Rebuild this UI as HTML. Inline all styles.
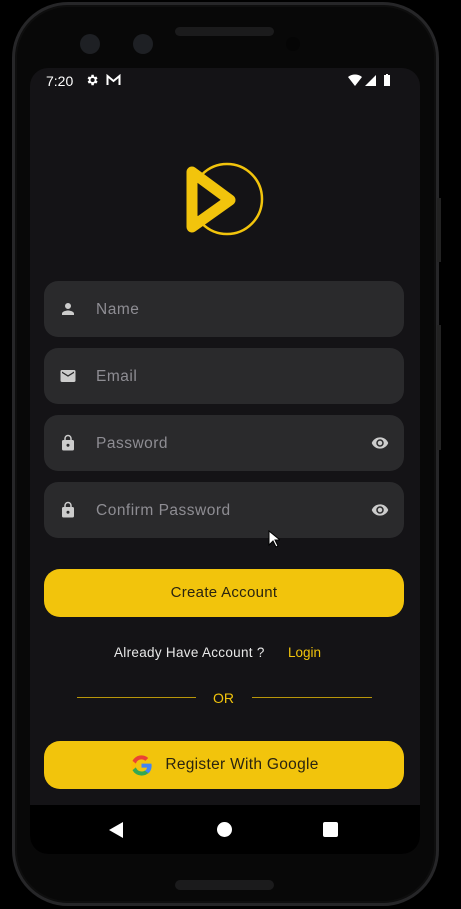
<!DOCTYPE html>
<html><head><style>
*{margin:0;padding:0;box-sizing:border-box}
body{width:461px;height:909px;background:#000;position:relative;overflow:hidden;font-family:"Liberation Sans",sans-serif}
.phone{position:absolute;left:12px;top:2px;width:427px;height:904px;border-radius:56px;background:#080808;border:3px solid #262628;box-shadow:inset 0 0 0 2px #0e0e0e}
.screen{position:absolute;left:30px;top:68px;width:390px;height:786px;background:#141316;border-radius:18px;overflow:hidden}
.t{position:absolute;color:#fff}
.field{position:absolute;left:14px;width:360px;height:56px;background:#2a2a2c;border-radius:14px}
.field span{position:absolute;left:52px;top:20px;color:#8e8d93;font-size:15.5px;letter-spacing:.5px}
.field svg{position:absolute;left:15px;top:19px}
.eye{left:auto!important;right:14px}
.btn{position:absolute;left:14px;width:360px;height:48px;background:#f2c40c;border-radius:16px;color:#2a2410;font-size:15px;text-align:center;line-height:48px;letter-spacing:.3px}
.nav{position:absolute;left:0;top:737px;width:390px;height:49px;background:#000}
</style></head><body>
<div class="phone"></div>
<div style="position:absolute;left:175px;top:27px;width:99px;height:9px;border-radius:5px;background:#1b1b1c"></div>
<div style="position:absolute;left:80px;top:34px;width:20px;height:20px;border-radius:50%;background:#1e2024"></div>
<div style="position:absolute;left:133px;top:34px;width:20px;height:20px;border-radius:50%;background:#1e2024"></div>
<div style="position:absolute;left:286px;top:37px;width:14px;height:14px;border-radius:50%;background:#050505"></div>
<div style="position:absolute;left:175px;top:880px;width:99px;height:10px;border-radius:5px;background:#1b1b1c"></div>
<div style="position:absolute;left:437px;top:198px;width:4px;height:64px;background:#222"></div>
<div style="position:absolute;left:437px;top:325px;width:4px;height:125px;background:#222"></div>
<div class="screen">
<div class="t" style="left:16px;top:5px;font-size:14px">7:20</div>
<svg style="position:absolute;left:55px;top:5px" width="14" height="14" viewBox="0 0 24 24"><path fill="#fff" d="M19.4 13a7.5 7.5 0 000-2l2.1-1.6-2-3.5-2.5 1a7 7 0 00-1.7-1L15 3h-4l-.4 2.9a7 7 0 00-1.7 1l-2.5-1-2 3.5L6.6 11a7.5 7.5 0 000 2l-2.1 1.6 2 3.5 2.5-1a7 7 0 001.7 1L11 21h4l.4-2.9a7 7 0 001.7-1l2.5 1 2-3.5zM13 15.5a3.5 3.5 0 110-7 3.5 3.5 0 010 7z"/></svg>
<svg style="position:absolute;left:76px;top:6px" width="15" height="12" viewBox="0 0 15 12"><path fill="none" stroke="#fff" stroke-width="2" d="M1.5 11V2l6 5 6-5v9"/></svg>
<svg style="position:absolute;left:318px;top:5px" width="46" height="14" viewBox="0 0 46 14"><path fill="#fff" d="M0 4a11 11 0 0114 0L7 13z M17 13L28 2v11z M36 2h2V1h2v1h2v11h-6z"/></svg>
<svg style="position:absolute;left:150px;top:92px" width="90" height="80" viewBox="0 0 90 80"><circle cx="47" cy="39" r="35" fill="none" stroke="#f2c40c" stroke-width="2.5"/><path d="M12 12L50 40 12 67z" fill="none" stroke="#f2c40c" stroke-width="11" stroke-linejoin="round"/></svg>
<div class="field" style="top:213px"><svg width="18" height="18" viewBox="0 0 24 24"><path fill="#ccc" d="M12 12a4 4 0 100-8 4 4 0 000 8zm0 2c-3 0-8 1.5-8 4v2h16v-2c0-2.5-5-4-8-4z"/></svg><span>Name</span></div>
<div class="field" style="top:280px"><svg width="18" height="18" viewBox="0 0 24 24"><path fill="#ccc" d="M20 4H4a2 2 0 00-2 2v12a2 2 0 002 2h16a2 2 0 002-2V6a2 2 0 00-2-2zm0 4l-8 5-8-5V6l8 5 8-5z"/></svg><span>Email</span></div>
<div class="field" style="top:347px"><svg width="18" height="18" viewBox="0 0 24 24"><path fill="#ccc" d="M18 8h-1V6a5 5 0 00-10 0v2H6a2 2 0 00-2 2v10a2 2 0 002 2h12a2 2 0 002-2V10a2 2 0 00-2-2zm-6 9a2 2 0 110-4 2 2 0 010 4zm3-9H9V6a3 3 0 016 0z"/></svg><span>Password</span><svg class="eye" width="20" height="18" viewBox="0 0 24 24"><path fill="#ccc" d="M12 4.5C7 4.5 2.7 7.6 1 12c1.7 4.4 6 7.5 11 7.5s9.3-3.1 11-7.5c-1.7-4.4-6-7.5-11-7.5zM12 17a5 5 0 110-10 5 5 0 010 10zm0-8a3 3 0 100 6 3 3 0 000-6z"/></svg></div>
<div class="field" style="top:414px"><svg width="18" height="18" viewBox="0 0 24 24"><path fill="#ccc" d="M18 8h-1V6a5 5 0 00-10 0v2H6a2 2 0 00-2 2v10a2 2 0 002 2h12a2 2 0 002-2V10a2 2 0 00-2-2zm-6 9a2 2 0 110-4 2 2 0 010 4zm3-9H9V6a3 3 0 016 0z"/></svg><span>Confirm Password</span><svg class="eye" width="20" height="18" viewBox="0 0 24 24"><path fill="#ccc" d="M12 4.5C7 4.5 2.7 7.6 1 12c1.7 4.4 6 7.5 11 7.5s9.3-3.1 11-7.5c-1.7-4.4-6-7.5-11-7.5zM12 17a5 5 0 110-10 5 5 0 010 10zm0-8a3 3 0 100 6 3 3 0 000-6z"/></svg></div>
<svg style="position:absolute;left:238px;top:462px" width="12" height="18" viewBox="0 0 12 18"><path d="M1 1v14l4-4 3 6 2-1-3-6h5z" fill="#fff" stroke="#000" stroke-width="1"/></svg>
<div class="btn" style="top:501px">Create Account</div>
<div class="t" style="left:84px;top:577px;font-size:13.5px;color:#e8e8e8;letter-spacing:.3px">Already Have Account ?</div>
<div class="t" style="left:258px;top:577px;font-size:13.5px;color:#f2c40c">Login</div>
<div style="position:absolute;left:47px;top:629px;width:119px;height:1px;background:#b8960a"></div>
<div style="position:absolute;left:222px;top:629px;width:120px;height:1px;background:#b8960a"></div>
<div class="t" style="left:183px;top:622px;font-size:14px;color:#f2c40c">OR</div>
<div class="btn" style="top:673px;padding-left:36px;font-size:15.5px">Register With Google
<svg style="position:absolute;left:84px;top:11px" width="27" height="27" viewBox="0 0 24 24"><path d="M21 12.2c0-.7-.1-1.3-.2-1.9H12v3.6h5a4.3 4.3 0 01-1.9 2.8v2.3h3A9 9 0 0021 12.2z" fill="#4285F4"/><path d="M12 21c2.4 0 4.5-.8 6-2.2l-3-2.3a5.4 5.4 0 01-8-2.8H4v2.4A9 9 0 0012 21z" fill="#34A853"/><path d="M7 13.7a5.4 5.4 0 010-3.4V7.9H4a9 9 0 000 8.2z" fill="#FBBC05"/><path d="M12 6.6c1.3 0 2.5.5 3.4 1.3l2.6-2.6A9 9 0 004 7.9l3 2.4a5.4 5.4 0 015-3.7z" fill="#EA4335"/></svg></div>
<div class="nav">
<svg style="position:absolute;left:79px;top:17px" width="15" height="16"><path d="M14 0v16L0 8z" fill="#fff"/></svg>
<div style="position:absolute;left:187px;top:17px;width:15px;height:15px;border-radius:50%;background:#fff"></div>
<div style="position:absolute;left:293px;top:17px;width:15px;height:15px;border-radius:2px;background:#fff"></div>
</div>
</div>
</body></html>
